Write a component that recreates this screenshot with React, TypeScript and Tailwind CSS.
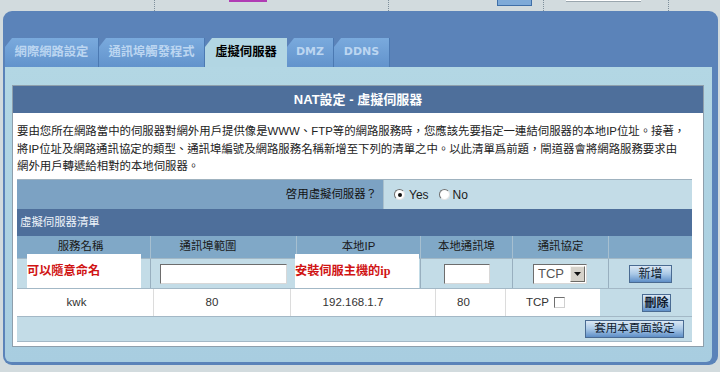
const FONT = "font-['Liberation_Sans','Noto_Sans_CJK_TC',sans-serif]"

const TABS = [
  { label: "網際網路設定", width: "w-[94px]", active: false, latin: false },
  { label: "通訊埠觸發程式", width: "w-[106px]", active: false, latin: false },
  { label: "虛擬伺服器", width: "w-[82px]", active: true, latin: false },
  { label: "DMZ", width: "w-[47px]", active: false, latin: true },
  { label: "DDNS", width: "w-[56px]", active: false, latin: true },
]

function Dotted() {
  return <div className="h-[11px] w-0 border-l border-dotted border-[#7d8e9a]" />
}

function TopStrip() {
  return (
    <div className="flex h-[11px] items-start">
      <div className="ml-[154px]"><Dotted /></div>
      <div className="ml-[74px] h-[2px] w-[38px] bg-[#b03cb4]" />
      <div className="ml-[121px]"><Dotted /></div>
      <div className="ml-[108px] h-[6px] w-[35px] border border-t-0 border-[#3f6fa8] bg-[#7eaad8]" />
      <div className="ml-[11px]"><Dotted /></div>
      <div className="ml-[22px] h-[2px] w-[75px] border-b border-[#9aa6ae] bg-white" />
      <div className="ml-[27px]"><Dotted /></div>
    </div>
  )
}

function Tabs() {
  return (
    <div className="flex h-[29px]">
      {TABS.map((t) => (
        <div
          key={t.label}
          className={`${t.width} h-full flex items-center justify-center [clip-path:polygon(7px_0,100%_0,100%_100%,0_100%,0_9px)] ${
            t.active
              ? "bg-[#b2d6e3] text-black"
              : "bg-linear-to-b from-[#7aaadd] to-[#6293cc] text-[#bcd6f1] border-r border-[#4b79b2]"
          } ${t.latin ? "font-['DejaVu_Sans',sans-serif] text-[11px] font-bold" : "text-[12.3px] font-bold"}`}
        >
          {t.label}
        </div>
      ))}
    </div>
  )
}

function Button({ children, className = "" }: { children: React.ReactNode; className?: string }) {
  return (
    <button
      type="button"
      className={`h-[18px] flex items-center justify-center border border-[#4a6b92] bg-linear-to-b from-[#dbe8f4] via-[#a9c8e6] to-[#5f8fc7] text-[#0f1a2e] leading-none ${className}`}
    >
      {children}
    </button>
  )
}

function Radio({ checked }: { checked?: boolean }) {
  return (
    <span className="w-[11px] h-[11px] rounded-full border border-[#6f6f6f] border-r-[#e4e4e4] border-b-[#e4e4e4] bg-white flex items-center justify-center">
      {checked && <span className="w-[4px] h-[4px] rounded-full bg-[#111]" />}
    </span>
  )
}

export default function App() {
  return (
    <div className={`w-[720px] h-[372px] overflow-hidden bg-[#d2dbde] ${FONT} text-[#1b1b1b]`}>
      <TopStrip />

      <div className="ml-[3px] w-[715px] h-[354px] rounded-[9px] bg-[#5b83b9] pt-[27px] pl-[2px] pr-[6px] pb-[3px] flex flex-col">
        <Tabs />

        <div className="flex-1 rounded-b-[6px] bg-linear-to-b from-[#b3d7e4] to-[#a8cde0] pt-[18px] pl-[7px]">
          <div className="w-[692px] h-[262px] bg-white border border-[#8e9fac] flex flex-col">
            {/* header */}
            <div className="h-[27px] bg-[#4e6f9b] text-white font-bold text-[13px] flex items-center justify-center">
              NAT設定 - 虛擬伺服器
            </div>

            {/* description */}
            <div className="h-[66px] px-[4px] pt-[10px] text-[11.4px] leading-[17.5px] text-[#222] whitespace-nowrap">
              要由您所在網路當中的伺服器對網外用戶提供像是WWW、FTP等的網路服務時，您應該先要指定一連結伺服器的本地IP位址。接著，
              <br />
              將IP位址及網路通訊協定的類型、通訊埠編號及網路服務名稱新增至下列的清單之中。以此清單爲前題，閘道器會將網路服務要求由
              <br />
              網外用戶轉遞給相對的本地伺服器。
            </div>

            {/* table */}
            <div className="relative ml-[4px] w-[675px] flex flex-col text-[11.4px]">
              {/* enable row */}
              <div className="h-[30px] flex border-t border-[#9fb2bf]">
                <div className="w-[366px] bg-[#7ca2c3] flex items-center justify-end pr-[6px] text-[#111]">
                  啓用虛擬伺服器？
                </div>
                <div className="flex-1 bg-[#c3dce7] border-l border-[#a9c0cd] flex items-center pl-[10px] text-[12px]">
                  <Radio checked />
                  <span className="ml-[4px]">Yes</span>
                  <span className="ml-[10px]"><Radio /></span>
                  <span className="ml-[3px]">No</span>
                </div>
              </div>

              {/* list header */}
              <div className="h-[27px] bg-[#4e6f9b] text-[#eef4fa] flex items-center pl-[3px]">
                虛擬伺服器清單
              </div>

              {/* column header */}
              <div className="h-[22px] grid grid-cols-[133px_146px_124px_92px_96px_84px] bg-[#80a8c7] text-[#1a1a1a]">
                <div className="flex items-center justify-center pr-[6px]">服務名稱</div>
                <div className="flex items-center justify-center pr-[31px] border-l border-[#a6bfd0]">通訊埠範圍</div>
                <div className="flex items-center justify-center border-l border-[#a6bfd0]">本地IP</div>
                <div className="flex items-center justify-center border-l border-[#a6bfd0]">本地通訊埠</div>
                <div className="flex items-center justify-center border-l border-[#a6bfd0]">通訊協定</div>
                <div className="border-l border-[#a6bfd0]" />
              </div>

              {/* input row */}
              <div className="h-[30px] grid grid-cols-[133px_146px_124px_92px_96px_84px] bg-[#c3dce7] border-t border-[#a3b8c6]">
                <div />
                <div className="flex items-center pl-[9px] border-l border-[#98afbf]">
                  <input className="w-[127px] h-[20px] bg-white border border-[#6d6d6d] border-r-[#d8d8d8] border-b-[#d8d8d8] outline-none" />
                </div>
                <div className="border-l border-[#98afbf]" />
                <div className="flex items-center pl-[23px] border-l border-[#98afbf]">
                  <input className="w-[46px] h-[20px] bg-white border border-[#6d6d6d] border-r-[#d8d8d8] border-b-[#d8d8d8] outline-none" />
                </div>
                <div className="flex items-center pl-[20px] border-l border-[#98afbf]">
                  <div className="w-[54px] h-[20px] bg-white border border-[#6d6d6d] border-r-[#d8d8d8] border-b-[#d8d8d8] flex items-center justify-between pl-[4px] pr-[1px]">
                    <span className="text-[13px] text-[#555]">TCP</span>
                    <span className="w-[15px] h-[16px] bg-[#d6d2ca] border border-[#f4f2ee] border-r-[#6c6a66] border-b-[#6c6a66] flex items-center justify-center">
                      <svg width="7" height="4" viewBox="0 0 7 4"><path d="M0 0h7L3.5 4z" fill="#111" /></svg>
                    </span>
                  </div>
                </div>
                <div className="flex items-center justify-center border-l border-[#98afbf]">
                  <Button className="w-[43px] text-[12px]">新增</Button>
                </div>
              </div>

              {/* data row */}
              <div className="h-[28px] grid grid-cols-[136px_137px_145px_70px_95px_92px] border-t border-[#a3b8c6] text-[#333] text-[11.5px]">
                <div className="bg-white flex items-center justify-center pr-[17px]">kwk</div>
                <div className="bg-white flex items-center justify-center pr-[20px] border-l border-[#dcdcdc]">80</div>
                <div className="bg-white flex items-center justify-center pr-[20px] border-l border-[#dcdcdc]">192.168.1.7</div>
                <div className="bg-white flex items-center justify-center pr-[14px] border-l border-[#dcdcdc]">80</div>
                <div className="bg-white flex items-center pl-[20px] gap-[5px] border-l border-[#dcdcdc]">
                  TCP
                  <span className="w-[11px] h-[11px] bg-white border border-[#6f6f6f] border-r-[#d0d0d0] border-b-[#d0d0d0]" />
                </div>
                <div className="bg-[#c3dce7] flex items-center justify-end pr-[21px]">
                  <Button className="w-[29px] text-[12px] font-bold">刪除</Button>
                </div>
              </div>

              {/* apply row */}
              <div className="h-[26px] bg-[#c3dce7] border-t border-b border-[#a3b8c6] flex items-center justify-end pr-[8px]">
                <Button className="w-[99px] text-[11.5px]">套用本頁面設定</Button>
              </div>

              {/* annotations */}
              <div className="absolute left-[10px] top-[75px] w-[114px] h-[34px] bg-white flex items-center text-[12.2px] font-bold text-[#d01414] pt-[1px]">
                可以隨意命名
              </div>
              <div className="absolute left-[278px] top-[75px] w-[124px] h-[34px] bg-white flex items-center text-[12.2px] font-bold text-[#d01414] pt-[1px]">
                安裝伺服主機的<span className="font-['Liberation_Serif',serif]">ip</span>
              </div>
            </div>
          </div>
        </div>
      </div>
    </div>
  )
}
